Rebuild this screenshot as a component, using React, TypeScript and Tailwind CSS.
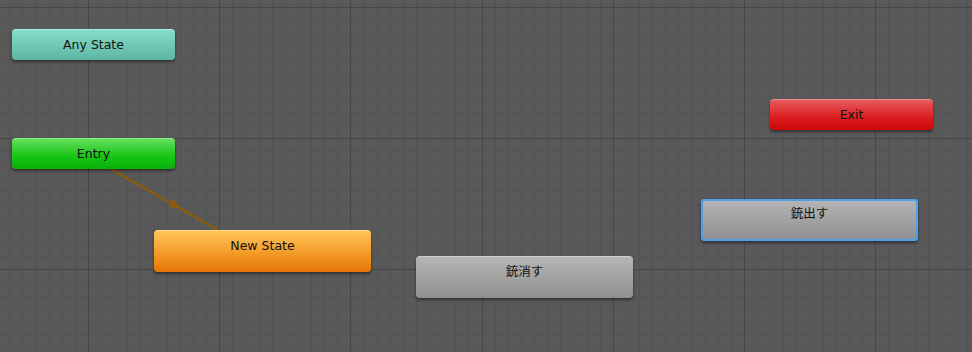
import React from "react";

type NodeProps = {
  label: string;
  x: number;
  y: number;
  w: number;
  h: number;
  skin: string;
};

// canvas grid, drawn once
const minorX = Array.from({ length: 76 }, (_, i) => 88 + (i - 7) * 13.12);
const minorY = Array.from({ length: 28 }, (_, i) => 7 + i * 13.12);

function Grid() {
  return (
    <svg className="absolute inset-0" width="972" height="352">
      {minorX.map((x, i) => {
        const major = (i - 7) % 10 === 0;
        const px = Math.round(x) + 0.5;
        return (
          <line
            key={"x" + i}
            x1={px}
            x2={px}
            y1={0}
            y2={352}
            stroke={major ? "#464646" : "#535353"}
            strokeWidth={1}
          />
        );
      })}
      {minorY.map((y, i) => {
        const major = i % 10 === 0;
        const py = Math.round(y) + 0.5;
        return (
          <line
            key={"y" + i}
            x1={0}
            x2={972}
            y1={py}
            y2={py}
            stroke={major ? "#464646" : "#535353"}
            strokeWidth={1}
          />
        );
      })}
    </svg>
  );
}

function StateNode({ label, x, y, w, h, skin }: NodeProps) {
  return (
    <div
      className={`absolute rounded-[4px] shadow-[0_2px_3px_rgba(0,0,0,0.45)] ${skin}`}
      style={{ left: x, top: y, width: w, height: h }}
    >
      <div className="flex h-[31px] items-center justify-center text-[12.5px] text-[#111]">
        {label}
      </div>
    </div>
  );
}

function Transition() {
  return (
    <svg className="absolute inset-0" width="972" height="352">
      <line x1="111" y1="169" x2="218" y2="230" stroke="#8d5c0a" strokeWidth="2.2" />
      <polygon points="180,208.3 168.8,207.3 173.8,198.7" fill="#8d5c0a" />
    </svg>
  );
}

export default function App() {
  return (
    <div
      className="relative h-[352px] w-[972px] overflow-hidden bg-[#595959]"
      style={{ fontFamily: '"DejaVu Sans", "Noto Sans CJK JP", sans-serif' }}
    >
      <Grid />
      <Transition />

      <StateNode
        label="Any State"
        x={12}
        y={29}
        w={163}
        h={31}
        skin="border-t border-[#a6eedd] bg-[linear-gradient(#86dcc8,#5db6a3)]"
      />
      <StateNode
        label="Entry"
        x={12}
        y={138}
        w={163}
        h={31}
        skin="border-t border-[#8cee84] bg-[linear-gradient(#66de5e,#14c414_60%,#08b008)]"
      />
      <StateNode
        label="Exit"
        x={770}
        y={99}
        w={163}
        h={31}
        skin="border-t border-[#f08a8c] bg-[linear-gradient(#e65a5e,#da1c1e_60%,#cf0404)]"
      />
      <StateNode
        label="New State"
        x={154}
        y={230}
        w={217}
        h={42}
        skin="border-t border-[#ffd990] bg-[linear-gradient(#ffc45c,#f39a26_55%,#e47606)]"
      />
      <StateNode
        label="銃消す"
        x={416}
        y={256}
        w={217}
        h={42}
        skin="border-t border-[#cfcfcf] bg-[linear-gradient(#b5b5b5,#8f8f8f)]"
      />
      <StateNode
        label="銃出す"
        x={701}
        y={199}
        w={217}
        h={42}
        skin="ring-2 ring-inset ring-[#4aa2ee] shadow-[0_0_5px_1px_rgba(60,150,235,0.6)] bg-[linear-gradient(#b5b5b5,#8f8f8f)]"
      />
    </div>
  );
}
